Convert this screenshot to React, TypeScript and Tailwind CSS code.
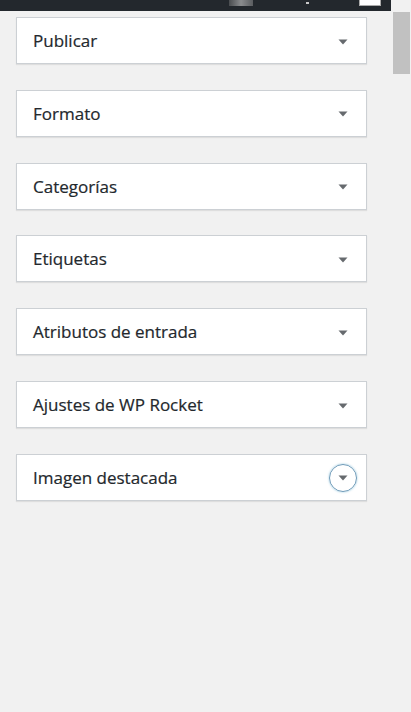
import React from "react";

const boxes = [
  "Publicar",
  "Formato",
  "Categorías",
  "Etiquetas",
  "Atributos de entrada",
  "Ajustes de WP Rocket",
  "Imagen destacada",
];

function Arrow() {
  return (
    <svg width="10" height="6" viewBox="0 0 10 6">
      <path d="M0.5 0.5 L9.5 0.5 L5 5.5 Z" fill="#666a6e" />
    </svg>
  );
}

export default function App() {
  return (
    <div
      className="flex w-[411px] h-[712px] bg-[#f1f1f1] overflow-hidden"
      style={{ fontFamily: '"Open Sans", "Noto Sans", sans-serif' }}
    >
      <div className="flex flex-col w-[392px] shrink-0">
        <div className="flex items-start h-[11px] w-[391px] bg-[#23282d]">
          <div className="ml-[229px] w-[24px] h-[6px] bg-gradient-to-r from-[#4a4d50] via-[#8a8c8e] to-[#5a5d60]" />
          <div className="ml-[53px] mt-[2px] w-[3px] h-[2px] bg-[#c8c8c8]" />
          <div className="ml-[50px] w-[22px] h-[6px] bg-white border border-[#aaa] border-t-0" />
        </div>
        <div className="flex flex-col gap-[25.83px] pl-[16px] pt-[6px]">
          {boxes.map((t, i) => (
            <div
              key={t}
              className="flex items-center justify-between w-[351px] h-[47px] bg-white border border-[#ccd0d4] shadow-[0_1px_1px_rgba(0,0,0,0.08)]"
            >
              <span className="pl-[16px] text-[17px] leading-[20px] text-[#23282d] mt-[1px] [-webkit-text-stroke:0.2px_#23282d]">
                {t}
              </span>
              <div
                className={
                  "flex items-center justify-center w-[28px] h-[28px] mr-[9px] rounded-full mt-[2px] " +
                  (i === boxes.length - 1
                    ? "border-[1.5px] border-[#6e9ab8] shadow-[0_0_2px_rgba(30,140,190,0.5)]"
                    : "")
                }
              >
                <Arrow />
              </div>
            </div>
          ))}
        </div>
      </div>
      <div className="flex flex-col w-[19px] pt-[12px] pl-[1px]">
        <div className="w-[17px] h-[62px] bg-[#c1c1c1]" />
      </div>
    </div>
  );
}
